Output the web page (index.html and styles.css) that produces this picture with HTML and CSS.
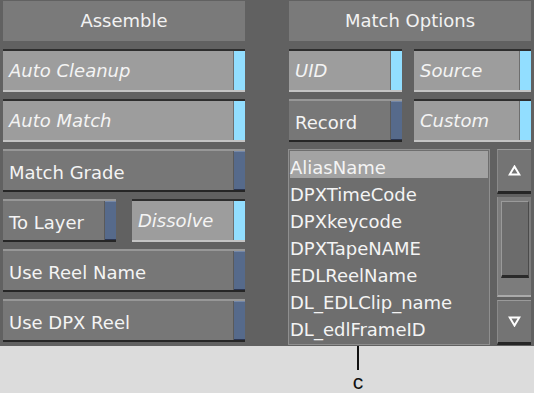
FILE: index.html
```html
<!DOCTYPE html>
<html>
<head>
<meta charset="utf-8">
<link rel="stylesheet" href="styles.css">
</head>
<body>
<div class="panel">
  <div class="col">
    <div class="header">Assemble</div>
    <div class="btn on"><span class="label">Auto Cleanup</span><span class="ind"></span></div>
    <div class="btn on"><span class="label">Auto Match</span><span class="ind"></span></div>
    <div class="btn off"><span class="label">Match Grade</span><span class="ind"></span></div>
    <div class="pair left-pair">
      <div class="btn off"><span class="label">To Layer</span><span class="ind"></span></div>
      <div class="btn on"><span class="label">Dissolve</span><span class="ind"></span></div>
    </div>
    <div class="btn off"><span class="label">Use Reel Name</span><span class="ind"></span></div>
    <div class="btn off"><span class="label">Use DPX Reel</span><span class="ind"></span></div>
  </div>
  <div class="col">
    <div class="header">Match Options</div>
    <div class="pair">
      <div class="btn on"><span class="label">UID</span><span class="ind"></span></div>
      <div class="btn on"><span class="label">Source</span><span class="ind"></span></div>
    </div>
    <div class="pair">
      <div class="btn off"><span class="label">Record</span><span class="ind"></span></div>
      <div class="btn on"><span class="label">Custom</span><span class="ind"></span></div>
    </div>
    <div class="listarea">
      <div class="list">
        <div class="item sel">AliasName</div>
        <div class="item">DPXTimeCode</div>
        <div class="item">DPXkeycode</div>
        <div class="item">DPXTapeNAME</div>
        <div class="item">EDLReelName</div>
        <div class="item">DL_EDLClip_name</div>
        <div class="item">DL_edlFrameID</div>
      </div>
      <div class="scroll">
        <div class="sbtn">
          <svg width="13" height="11" viewBox="0 0 13 11"><path d="M6.5 1.5 L11.3 9.6 L1.7 9.6 Z" fill="none" stroke="#fff" stroke-width="2"/></svg>
        </div>
        <div class="track"><div class="thumb"></div></div>
        <div class="sbtn">
          <svg width="13" height="11" viewBox="0 0 13 11"><path d="M6.5 9.5 L11.3 1.4 L1.7 1.4 Z" fill="none" stroke="#fff" stroke-width="2"/></svg>
        </div>
      </div>
    </div>
  </div>
</div>
<div class="below">
  <div class="callout">
    <div class="leader"></div>
    <div class="tag">c</div>
  </div>
</div>
</body>
</html>
```

FILE: styles.css
```css
html, body {
  margin: 0;
  padding: 0;
  background: #dcdcdc;
}
body {
  width: 534px;
  height: 393px;
  overflow: hidden;
  font-family: "DejaVu Sans", "Liberation Sans", sans-serif;
}
.panel {
  height: 346px;
  background: #616161;
  box-sizing: border-box;
  padding: 1px 3px 0 3px;
  display: grid;
  grid-template-columns: 242px 242px;
  column-gap: 44px;
}
.col {
  display: flex;
  flex-direction: column;
  gap: 7px;
}
.header {
  height: 40px;
  margin-bottom: 1px;
  background: #7a7a7a;
  color: #f2f2f2;
  font-size: 18px;
  display: flex;
  align-items: center;
  justify-content: center;
  box-sizing: border-box;
  padding-bottom: 1px;
}
.btn {
  height: 43px;
  box-sizing: border-box;
  display: flex;
  align-items: stretch;
  color: #f4f4f4;
  font-size: 18px;
}
.btn .label {
  flex: 1;
  display: flex;
  align-items: center;
  padding-left: 6px;
  white-space: nowrap;
}
.btn .ind {
  width: 11px;
}
.btn.on {
  background: #9d9d9d;
  border-top: 2px solid #2e2e2e;
  border-bottom: 2px solid #c4c4c4;
}
.btn.on .label {
  font-style: italic;
  border-right: 1px solid #6e6e6e;
}
.btn.on .ind {
  background: #92deff;
}
.btn.off {
  background: #777777;
  border-top: 2px solid #979797;
  border-bottom: 2px solid #262626;
}
.btn.off .label {
  border-right: 1px solid #5a5a5a;
  padding-top: 3px;
}
.btn.off .ind {
  background: #566a8b;
  box-shadow: inset 0 1px 0 #7587a6, inset 0 -1px 0 #2b3550;
}
.pair {
  display: grid;
  grid-template-columns: 113px 117px;
  column-gap: 12px;
}
.left-pair {
  grid-template-columns: 113px 113px;
  column-gap: 16px;
}
.listarea {
  height: 196px;
  display: flex;
  gap: 7px;
  margin-left: -1px;
}
.list {
  width: 203px;
  box-sizing: border-box;
  border: 1px solid #8f8f8f;
  background: #6e6e6e;
  padding: 1px 1px;
}
.item {
  height: 27px;
  box-sizing: border-box;
  padding-top: 5px;
  display: flex;
  align-items: center;
  color: #f4f4f4;
  font-size: 18px;
  white-space: nowrap;
}
.item.sel {
  background: #a3a3a3;
}
.scroll {
  width: 34px;
  display: flex;
  flex-direction: column;
  gap: 3px;
}
.sbtn {
  height: 45px;
  box-sizing: border-box;
  background: #747474;
  border-top: 1px solid #9a9a9a;
  border-left: 1px solid #8a8a8a;
  border-bottom: 3px solid #262626;
  display: flex;
  align-items: center;
  justify-content: center;
}
.track {
  flex: 1;
  box-sizing: border-box;
  background: #7c7c7c;
  border-left: 1px solid #8f8f8f;
  border-bottom: 2px solid #aaaaaa;
  padding: 4px 2px 17px 3px;
}
.thumb {
  height: 100%;
  box-sizing: border-box;
  background: #6c6c6c;
  border: 1px solid #9a9a9a;
  border-bottom: 3px solid #2a2a2a;
  border-right: 1px solid #4a4a4a;
}
.below {
  height: 47px;
  display: flex;
}
.callout {
  margin-left: 349px;
  width: 18px;
  display: flex;
  flex-direction: column;
  align-items: center;
}
.leader {
  width: 2px;
  height: 25px;
  background: #111;
}
.tag {
  font-family: "Liberation Sans", Arial, sans-serif;
  font-size: 21px;
  line-height: 22px;
  margin-top: 1px;
  color: #111;
}
```
